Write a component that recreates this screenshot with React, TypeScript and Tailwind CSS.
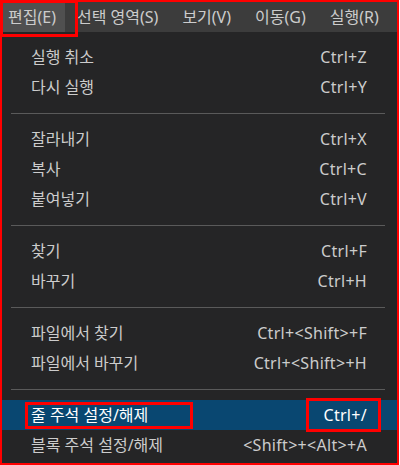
import React from "react";

type Item = { label: string; shortcut: string; active?: boolean } | "sep";

const items: Item[] = [
  { label: "실행 취소", shortcut: "Ctrl+Z" },
  { label: "다시 실행", shortcut: "Ctrl+Y" },
  "sep",
  { label: "잘라내기", shortcut: "Ctrl+X" },
  { label: "복사", shortcut: "Ctrl+C" },
  { label: "붙여넣기", shortcut: "Ctrl+V" },
  "sep",
  { label: "찾기", shortcut: "Ctrl+F" },
  { label: "바꾸기", shortcut: "Ctrl+H" },
  "sep",
  { label: "파일에서 찾기", shortcut: "Ctrl+<Shift>+F" },
  { label: "파일에서 바꾸기", shortcut: "Ctrl+<Shift>+H" },
  "sep",
  { label: "줄 주석 설정/해제", shortcut: "Ctrl+/", active: true },
  { label: "블록 주석 설정/해제", shortcut: "<Shift>+<Alt>+A" },
];

const menus = ["편집(E)", "선택 영역(S)", "보기(V)", "이동(G)", "실행(R)"];

export default function App() {
  return (
    <div
      className="relative w-[399px] h-[465px] border-2 border-[#ff0000] bg-[#252526] text-[16px] text-[#cccccc] overflow-hidden"
      style={{ fontFamily: '"Noto Sans", "Noto Sans CJK KR", sans-serif' }}
    >
      <div className="flex h-[30px] bg-[#3c3c3c] items-center">
        {menus.map((m, i) => (
          <div
            key={m}
            className={
              i === 0
                ? "h-full flex items-center pl-[6px] pr-[9px] bg-[#505050] whitespace-nowrap"
                : "h-full flex items-center px-[12px] whitespace-nowrap"
            }
          >
            {m}
          </div>
        ))}
      </div>
      <div className="pt-[10px]">
        {items.map((it, i) =>
          it === "sep" ? (
            <div key={i} className="h-[22px] flex items-center pl-[9px] pr-[12px]">
              <div className="h-px w-full bg-[#5a5a5a]" />
            </div>
          ) : (
            <div
              key={i}
              className={
                it.active
                  ? "h-[30px] flex items-center justify-between pl-[29px] pr-[30px] bg-[#094771] text-white"
                  : "h-[30px] flex items-center justify-between pl-[29px] pr-[30px]"
              }
            >
              <span className="whitespace-nowrap">{it.label}</span>
              <span className="whitespace-nowrap tracking-[0.3px]">{it.shortcut}</span>
            </div>
          )
        )}
      </div>
      <div className="absolute left-[-2px] top-[-2px] w-[78px] h-[37px] border-[3px] border-[#ff0000]" />
      <div className="absolute left-[23px] top-[400px] w-[168px] h-[27px] border-[3px] border-[#ff0000]" />
      <div className="absolute left-[304px] top-[396px] w-[75px] h-[34px] border-[3px] border-[#ff0000]" />
    </div>
  );
}
